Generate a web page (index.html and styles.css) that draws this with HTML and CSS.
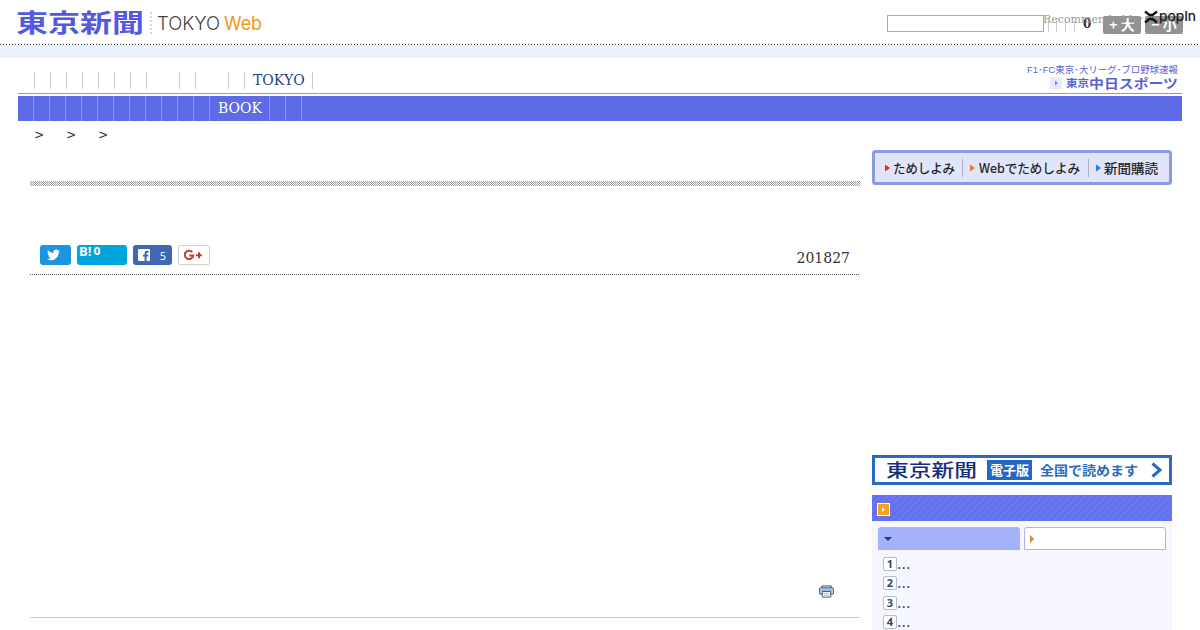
FILE: index.html
```html
<!DOCTYPE html>
<html lang="ja">
<head>
    <meta charset="UTF-8">
    <title>東京新聞 TOKYO Web</title>
    <link rel="stylesheet" href="styles.css">
</head>
<body>
    <header class="header">
        <svg class="logo" width="270" height="44" viewBox="0 0 270 44">
            <text class="logo-ja" x="16" y="32" textLength="128" lengthAdjust="spacingAndGlyphs">東京新聞</text>
            <path d="M151 12v22" stroke="#a9b0bb" stroke-dasharray="2 2"/>
            <text class="logo-en" x="157" y="30" textLength="63" lengthAdjust="spacingAndGlyphs">TOKYO</text>
            <text class="logo-web" x="224" y="30" textLength="38" lengthAdjust="spacingAndGlyphs">Web</text>
        </svg>
        <div class="tools">
            <input type="text" class="search">
            <ul class="tool-links"><li></li><li></li><li></li><li></li></ul>
            <b class="count">0</b>
            <div class="font-size"><span>+</span>大</div>
            <div class="font-size"><span>−</span>小</div>
        </div>
        <div class="recommend">
            <span>Recommended by</span>
            <svg width="54" height="24" viewBox="0 0 54 24">
                <path d="M2 3.500 6.500 7h3L14 3.500M2 14.500 6.500 11h3l4.500 3.500" fill="none" stroke="#111" stroke-width="2.300"/>
                <text class="popin" x="16" y="12.500" textLength="37" lengthAdjust="spacingAndGlyphs">popIn</text>
            </svg>
        </div>
    </header>

    <div class="container">
        <div class="topnav">
            <ul>
                <li></li><li></li><li></li><li></li><li></li><li></li><li></li><li></li>
                <li class="wide"></li><li></li><li class="wide"></li><li></li>
                <li class="tokyo"><a>TOKYO</a></li>
            </ul>
            <svg class="chunichi" width="156" height="30" viewBox="0 0 156 30">
                <text class="chunichi-sub" x="2" y="11" textLength="151" lengthAdjust="spacingAndGlyphs">F1･FC東京･大リーグ･プロ野球速報</text>
                <rect x="25" y="15" width="12" height="12" fill="#e8ebfb"/>
                <path d="M30 18.500v5l3-2.500z" fill="#7c85dc"/>
                <text class="chunichi-tokyo" x="41" y="25" textLength="23" lengthAdjust="spacingAndGlyphs">東京</text>
                <text class="chunichi-name" x="64" y="25.500" textLength="89" lengthAdjust="spacingAndGlyphs">中日スポーツ</text>
            </svg>
        </div>
        <ul class="subnav">
            <li></li><li></li><li></li><li></li><li></li><li></li><li></li><li></li><li></li><li></li><li></li><li></li>
            <li class="book"><a>BOOK</a></li>
            <li></li><li></li>
        </ul>
        <div class="breadcrumb"><span>&gt;</span><span>&gt;</span><span>&gt;</span></div>

        <div class="columns">
            <main class="main">
                <div class="title-line"></div>
                <div class="share-row">
                    <a class="share twitter">
                        <svg width="13" height="12" viewBox="0 0 24 22"><path fill="#fff" d="M24 3.500c-.9.400-1.800.700-2.800.800 1-.6 1.800-1.600 2.200-2.700-1 .6-2 1-3.100 1.200A4.900 4.900 0 0 0 11.900 7.300C7.800 7.100 4.200 5.100 1.700 2.100.4 4.400 1.100 7.200 3.200 8.600c-.8 0-1.600-.2-2.200-.6 0 2.300 1.600 4.400 3.900 4.900-.7.200-1.500.200-2.200.1.600 2 2.400 3.400 4.600 3.400A9.900 9.900 0 0 1 0 18.400 14 14 0 0 0 21.500 6c1-.7 1.800-1.500 2.500-2.500z"/></svg>
                    </a>
                    <a class="share hatena"><b>B!</b><span>0</span></a>
                    <a class="share facebook">
                        <svg width="12" height="12" viewBox="0 0 12 12"><path fill="#fff" d="M1 0h10a1 1 0 0 1 1 1v10a1 1 0 0 1-1 1H8.600V7.600h1.700l.2-1.900H8.600V4.600c0-.6.200-.9.900-.9h1.100V1.900c-2.600-.3-4 .4-4 2.500v1.300H5v1.900h1.600V12H1a1 1 0 0 1-1-1V1a1 1 0 0 1 1-1z"/></svg>
                        <span>5</span>
                    </a>
                    <a class="share google">
                        <svg width="19" height="12" viewBox="0 0 19 12"><path d="M8.300 3.200A4.200 4.200 0 1 0 9.200 6.500H5.300M12 6.300h6M15 3.300v6" fill="none" stroke="#c23f35" stroke-width="2"/></svg>
                    </a>
                    <span class="date">201827</span>
                </div>
                <div class="article">
                    <svg class="print" width="15" height="15" viewBox="0 0 16 15">
                        <path d="M3 1.500h10v3H3z" fill="#dbe8f8" stroke="#3d587d"/>
                        <rect x=".5" y="3.500" width="15" height="7" rx="1.500" fill="#b5cdec" stroke="#3d587d"/>
                        <path d="M2 6h12" stroke="#86a7d2"/>
                        <path d="M3.500 7.500h9v6h-9z" fill="#fff" stroke="#3d587d"/>
                        <path d="M5 9.500h6M5 11.500h6" stroke="#9db7d8"/>
                    </svg>
                </div>
            </main>

            <aside class="side">
                <svg class="subscribe" width="300" height="35" viewBox="0 0 300 35">
                    <rect x="1.500" y="1.500" width="297" height="32" rx="2" fill="#e0e5f9" stroke="#8b9be0" stroke-width="3"/>
                    <path d="M13 14.500v7l5-3.500z" fill="#e8222a"/>
                    <text x="21" y="23" textLength="62" lengthAdjust="spacingAndGlyphs">ためしよみ</text>
                    <path d="M90.500 9v18M216.500 9v18" stroke="#aeb1bb"/>
                    <path d="M98 14.500v7l5-3.500z" fill="#f4772b"/>
                    <text x="107" y="23" textLength="101" lengthAdjust="spacingAndGlyphs">Webでためしよみ</text>
                    <path d="M224 14.500v7l5-3.500z" fill="#2383e8"/>
                    <text x="232" y="23" textLength="54" lengthAdjust="spacingAndGlyphs">新聞購読</text>
                </svg>
                <svg class="denshi" width="300" height="30" viewBox="0 0 300 30">
                    <rect x="1.500" y="1.500" width="297" height="27" fill="#fff" stroke="#2b6cc0" stroke-width="3"/>
                    <text class="denshi-logo" x="14" y="21.500" textLength="91" lengthAdjust="spacingAndGlyphs">東京新聞</text>
                    <rect x="115" y="5" width="45" height="20" fill="#2368c6"/>
                    <text class="denshi-label" x="118" y="20" textLength="39" lengthAdjust="spacingAndGlyphs">電子版</text>
                    <text class="denshi-text" x="168" y="20" textLength="98" lengthAdjust="spacingAndGlyphs">全国で読めます</text>
                    <path d="M280.500 8.500l7.500 6.500-7.500 6.500" fill="none" stroke="#2b6cc0" stroke-width="3"/>
                </svg>
                <section class="ranking">
                    <h2>
                        <svg width="13" height="13" viewBox="0 0 13 13"><rect x=".5" y=".5" width="12" height="12" fill="#f7a11a" stroke="#fff"/><path d="M5 4v5l3-2.500z" fill="#fff"/></svg>
                    </h2>
                    <div class="tabs">
                        <div class="tab active"><svg width="8" height="5"><path d="M0 0h8L4 4z" fill="#20308c"/></svg></div>
                        <div class="tab"><svg width="5" height="8"><path d="M0 0v8l4-4z" fill="#dd802b"/></svg></div>
                    </div>
                    <ol>
                        <li><b>1</b>...</li>
                        <li><b>2</b>...</li>
                        <li><b>3</b>...</li>
                        <li><b>4</b>...</li>
                    </ol>
                </section>
            </aside>
        </div>
    </div>
</body>
</html>
```
FILE: styles.css
```css
* {
    box-sizing: border-box;
}

body {
    margin: 0;
    height: 630px;
    overflow: hidden;
    background: #fff;
    color: #333;
    font-family: "DejaVu Serif", "Noto Sans CJK JP", serif;
    font-size: 14px;
}

ul, ol {
    list-style: none;
    margin: 0;
    padding: 0;
}

svg {
    display: block;
    flex-shrink: 0;
}

svg text {
    font-family: "Liberation Sans", "Noto Sans CJK JP", sans-serif;
}

.header {
    position: relative;
    display: flex;
    justify-content: space-between;
    height: 58px;
    background: linear-gradient(#fff 45px, #ebf0fd 45px);
}

.header::after {
    content: "";
    position: absolute;
    left: 0;
    right: 0;
    top: 44px;
    height: 1px;
    background: repeating-linear-gradient(to right, #444 0 1px, #fff 1px 3px);
}

.logo .logo-ja {
    font-size: 24.500px;
    font-weight: bold;
    fill: #5558e0;
}

.logo .logo-en, .logo .logo-web {
    font-family: Inter, "Liberation Sans", sans-serif;
    font-size: 19px;
    font-weight: 300;
    fill: #444;
}

.logo .logo-web {
    font-weight: 400;
    fill: #f0981c;
}

.tools {
    display: flex;
    align-items: flex-start;
    padding: 15px 17px 0 0;
}

.search {
    width: 157px;
    height: 17px;
    border: 1px solid #aaa;
    padding: 0;
}

.tool-links {
    display: flex;
    padding: 6px 0 0 4px;
}

.tool-links li {
    width: 9px;
    height: 11px;
    border-left: 1px solid #ccc;
}

.tool-links li:first-child {
    width: 8px;
}

.count {
    width: 20px;
    font-size: 12px;
    line-height: 18px;
}

.font-size {
    width: 38px;
    height: 18px;
    margin-top: 1px;
    border-radius: 2px;
    background: #929292;
    color: #fff;
    font: bold 14px/17px "Noto Sans CJK JP", sans-serif;
    text-align: center;
}

.font-size + .font-size {
    margin-left: 4px;
}

.font-size span {
    margin-right: 3px;
}

.recommend {
    position: absolute;
    top: 8px;
    right: 3px;
    width: 154px;
    color: #999;
    font-size: 11px;
    line-height: 24px;
    white-space: nowrap;
}

.recommend svg {
    position: absolute;
    top: 0;
    right: 0;
}

.recommend .popin {
    font-family: Inter, sans-serif;
    font-size: 13px;
    fill: #111;
    stroke: #111;
    stroke-width: .2px;
}

.container {
    width: 1164px;
    margin: 0 auto;
}

.topnav {
    display: flex;
    justify-content: space-between;
    height: 36px;
    border-bottom: 1px solid #999;
}

.topnav ul {
    display: flex;
    padding-top: 14px;
    padding-left: 1px;
}

.topnav li {
    width: 16px;
    height: 17px;
    border-right: 1px solid #c9c9c9;
}

.topnav li.wide {
    width: 33px;
}

.topnav li.tokyo {
    width: 68px;
    padding-left: 8px;
    color: #1c4480;
    line-height: 17px;
}

.chunichi {
    margin-top: 4px;
}

.topnav .chunichi {
    margin-right: 1px;
}

.chunichi text {
    fill: #5760d4;
}

.chunichi .chunichi-sub {
    font-size: 9.500px;
}

.chunichi .chunichi-tokyo {
    font-size: 10.500px;
    font-weight: bold;
}

.chunichi .chunichi-name {
    font-size: 13px;
    font-weight: bold;
}

.subnav {
    display: flex;
    height: 25px;
    margin-top: 2px;
    background: #5f6be6;
    color: #fff;
    line-height: 24px;
}

.subnav li {
    width: 16px;
    border-right: 1px solid #8f98ee;
}

.subnav li.book {
    width: 60px;
    padding-left: 8px;
}

.breadcrumb {
    display: flex;
    gap: 22px;
    height: 29px;
    padding-left: 16px;
    font-size: 12px;
    line-height: 29px;
}

.breadcrumb span {
    width: 10px;
}

.columns {
    display: flex;
    justify-content: space-between;
    padding: 0 10px 0 12px;
}

.main {
    width: 830px;
    padding-top: 31px;
}

.title-line {
    height: 5px;
    background: repeating-conic-gradient(#999 0 25%, #fff 0 50%) 0 0 / 2px 2px;
}

.share-row {
    display: flex;
    align-items: flex-start;
    gap: 6px;
    height: 89px;
    padding: 59px 10px 0;
    background: repeating-linear-gradient(to right, #555 0 1px, #fff 1px 2px) left bottom / 100% 1px no-repeat;
}

.share {
    display: flex;
    align-items: center;
    height: 20px;
    border-radius: 3px;
    color: #fff;
    font-family: "Open Sans", sans-serif;
    font-size: 11px;
}

.twitter {
    width: 31px;
    padding-left: 7px;
    background: #1b95e0;
}

.hatena {
    width: 50px;
    align-items: flex-start;
    padding-left: 2px;
    background: #00a5de;
    line-height: 14px;
}

.hatena b {
    font-size: 13px;
    line-height: 13px;
}

.hatena span {
    margin-left: 2px;
    font-family: "DejaVu Sans", sans-serif;
    font-size: 10px;
    font-weight: bold;
}

.facebook {
    width: 39px;
    padding: 0 6px 0 5px;
    justify-content: space-between;
    background: #4267b2;
}

.google {
    width: 32px;
    padding-left: 5px;
    border: 1px solid #d0d0d0;
    border-radius: 2px;
}

.date {
    margin-left: auto;
    line-height: 27px;
}

.article {
    display: flex;
    justify-content: flex-end;
    align-items: flex-end;
    height: 343px;
    padding: 0 26px 18px 0;
    border-bottom: 1px solid #ccc;
}

.side {
    width: 300px;
}

.subscribe text {
    font-family: "Noto Sans CJK JP", sans-serif;
    font-size: 13px;
    fill: #151515;
    stroke: #151515;
    stroke-width: .2px;
}

.denshi {
    margin-top: 270px;
}

.denshi .denshi-logo {
    font-family: "Noto Sans CJK JP", serif;
    font-size: 18px;
    font-weight: 500;
    fill: #142f78;
}

.denshi .denshi-label, .denshi .denshi-text {
    font-size: 13px;
    font-weight: bold;
    fill: #fff;
}

.denshi .denshi-text {
    fill: #2b6cc0;
}

.ranking {
    height: 160px;
    margin-top: 10px;
    background: #f5f6fe;
}

.ranking h2 {
    height: 26px;
    margin: 0;
    padding: 8px 5px;
    background: repeating-linear-gradient(135deg, #6976f2 0 3px, #636fe9 3px 5px);
}

.tabs {
    display: flex;
    gap: 4px;
    padding: 6px;
}

.tab {
    width: 142px;
    height: 23px;
    padding: 7px 5px;
    border: 1px solid #abb5ec;
    border-radius: 3px 3px 0 0;
    background: #fff;
}

.tab.active {
    padding-top: 9px;
    border-color: #a4b2fc;
    background: #a4b2fc;
}

.ranking ol {
    padding: 1px 11px;
    color: #344374;
}

.ranking li {
    display: flex;
    height: 19.300px;
    line-height: 14px;
}

.ranking b {
    width: 14px;
    height: 14px;
    border: 1px solid #b2bad8;
    border-radius: 2px;
    background: #fff;
    font: bold 11px/12px "Open Sans", sans-serif;
    text-align: center;
}
```
